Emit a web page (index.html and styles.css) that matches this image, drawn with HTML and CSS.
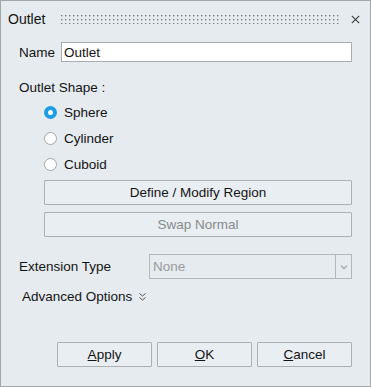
FILE: index.html
```html
<!DOCTYPE html>
<html lang="en">
<head>
    <meta charset="UTF-8">
    <title>Outlet</title>
    <link rel="stylesheet" href="styles.css">
</head>
<body>
    <div class="dialog">
        <div class="titlebar">
            <span class="title">Outlet</span>
            <svg class="grip" height="9">
                <defs>
                    <pattern id="dots" width="4" height="4" patternUnits="userSpaceOnUse">
                        <rect x="0" y="0" width="1.4" height="1.4" fill="#7c7c7c"/>
                    </pattern>
                </defs>
                <rect width="100%" height="100%" fill="url(#dots)"/>
            </svg>
            <svg class="close" width="9" height="9" viewBox="0 0 9 9">
                <path d="M0.8 0.8 L8.2 8.2 M8.2 0.8 L0.8 8.2" stroke="#3a3a3a" stroke-width="1.1"/>
            </svg>
        </div>

        <div class="content">
            <div class="name-row">
                <label class="label">Name</label>
                <input class="name-input" type="text" value="Outlet">
            </div>

            <div class="section-label">Outlet Shape :</div>
            <div class="radios">
                <div class="radio-row"><span class="radio checked"></span>Sphere</div>
                <div class="radio-row"><span class="radio"></span>Cylinder</div>
                <div class="radio-row"><span class="radio"></span>Cuboid</div>
            </div>

            <div class="btn wide">Define / Modify Region</div>
            <div class="btn wide disabled">Swap Normal</div>

            <div class="ext-row">
                <span class="label">Extension Type</span>
                <div class="select">
                    <span class="select-text">None</span>
                    <span class="select-arrow">
                        <svg width="8" height="6" viewBox="0 0 8 6">
                            <path d="M1 1.5 L4 4.5 L7 1.5" fill="none" stroke="#b0b0b0" stroke-width="1.6"/>
                        </svg>
                    </span>
                </div>
            </div>

            <div class="advanced">
                Advanced Options
                <svg class="chevron" width="9" height="10" viewBox="0 0 9 10">
                    <path d="M1.5 1.5 L4.5 4 L7.5 1.5 M1.5 5.5 L4.5 8 L7.5 5.5" fill="none" stroke="#555" stroke-width="1"/>
                </svg>
            </div>
        </div>

        <div class="footer">
            <div class="btn"><u>A</u>pply</div>
            <div class="btn"><u>O</u>K</div>
            <div class="btn"><u>C</u>ancel</div>
        </div>
    </div>
</body>
</html>
```

FILE: styles.css
```css
body {
    margin: 0;
    padding: 0;
    font-family: "Liberation Sans", Arial, sans-serif;
    font-size: 13.5px;
    color: #141414;
}
.dialog {
    width: 371px;
    height: 387px;
    box-sizing: border-box;
    border: 1px solid #a3a7aa;
    background-color: #e5ebef;
    display: flex;
    flex-direction: column;
}
.titlebar {
    height: 36px;
    display: flex;
    align-items: center;
    padding-left: 7px;
    padding-right: 10px;
}
.title {
    font-size: 14px;
}
.grip {
    flex: 1;
    margin: 1px 11px 0 16px;
}
.close {
    margin-top: 1px;
}
.content {
    padding: 0 18px;
    flex: 1;
}
.name-row {
    display: flex;
    align-items: center;
    margin-top: 5px;
}
.name-input {
    flex: 1;
    margin-left: 6px;
    height: 20px;
    box-sizing: border-box;
    border: 1px solid #a9adb0;
    background: white;
    font-family: inherit;
    font-size: 13.5px;
    padding: 0 2px;
    color: #141414;
    outline: none;
}
.section-label {
    margin-top: 18px;
    line-height: 16px;
}
.radios {
    margin-top: 3px;
    padding-left: 25px;
}
.radio-row {
    height: 26px;
    display: flex;
    align-items: center;
}
.radio {
    width: 13px;
    height: 13px;
    box-sizing: border-box;
    border: 1px solid #a6a6a6;
    border-radius: 50%;
    background: white;
    margin-right: 7px;
}
.radio.checked {
    border: 4px solid #1d9ee2;
}
.btn {
    height: 25px;
    box-sizing: border-box;
    border: 1px solid #acb0b3;
    border-radius: 1px;
    background-color: #e8eef2;
    display: flex;
    align-items: center;
    justify-content: center;
}
.btn.wide {
    margin-left: 25px;
    margin-top: 3px;
}
.btn.wide + .btn.wide {
    margin-top: 7px;
}
.btn.disabled {
    color: #8a8a8a;
}
.ext-row {
    display: flex;
    align-items: center;
    margin-top: 17px;
}
.ext-row .label {
    width: 130px;
}
.select {
    flex: 1;
    height: 25px;
    box-sizing: border-box;
    border: 1px solid #b3b7ba;
    display: flex;
    align-items: stretch;
}
.select-text {
    flex: 1;
    color: #9a9a9a;
    padding-left: 3px;
    display: flex;
    align-items: center;
}
.select-arrow {
    width: 15px;
    border-left: 1px solid #b3b7ba;
    display: flex;
    align-items: center;
    justify-content: center;
}
.advanced {
    margin-top: 10px;
    margin-left: 3px;
    display: flex;
    align-items: center;
    line-height: 16px;
}
.chevron {
    margin-left: 6px;
}
.footer {
    display: flex;
    justify-content: flex-end;
    gap: 5px;
    padding: 0 18px 19px 0;
}
.footer .btn {
    width: 95px;
}
```
